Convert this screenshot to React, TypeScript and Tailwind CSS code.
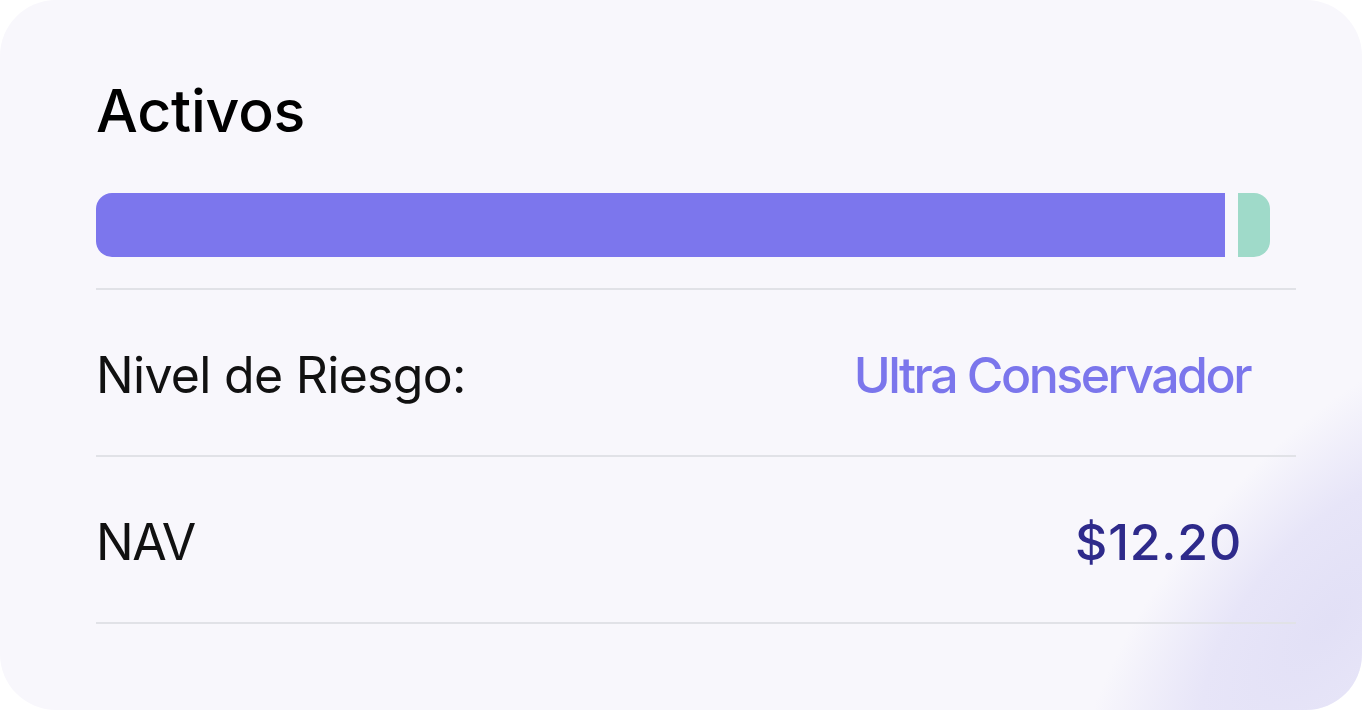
import React from 'react';

const rows = [
  {
    label: 'Nivel de Riesgo:',
    labelClass: 'tracking-[-0.7px]',
    value: 'Ultra Conservador',
    valueClass: 'text-[#7b76ec] pr-[46px] tracking-[-2.5px]',
  },
  {
    label: 'NAV',
    labelClass: 'tracking-[-1.5px]',
    value: '$12.20',
    valueClass: 'text-[#2e2a8b] pr-[54px] tracking-[0.8px]',
  },
];

const App = () => {
  return (
    <div className="w-[1364px] h-[712px] bg-white" style={{ fontFamily: 'Inter, "Open Sans", sans-serif' }}>
      <div className="relative w-[1362px] h-[710px] rounded-[56px] bg-[#f8f7fc] overflow-hidden pl-[96px] pr-[66px]">
        {/* soft lavender glow, bottom right */}
        <div className="absolute right-[-318px] bottom-[-70px] w-[700px] h-[320px] rounded-full bg-[radial-gradient(closest-side,#e2e0f6_0%,#e7e5f8_50%,rgba(248,247,252,0)_100%)] rotate-[-50deg] pointer-events-none" />

        <div className="relative">
          <h1 className="pt-[81px] text-[59px] leading-none font-medium text-black tracking-[-0.2px]">Activos</h1>

          {/* allocation bar */}
          <div className="mt-[53px] mr-[26px] flex h-[64px] gap-[13px]">
            <div className="flex-1 rounded-l-[16px] bg-[#7c76ed]" />
            <div className="w-[32px] rounded-r-[16px] bg-[#9fdac9]" />
          </div>

          <div className="mt-[31px] h-[2px] bg-[#e1e2e7]" />

          {rows.map((r) => (
            <div key={r.label}>
              <div className="flex h-[165px] items-center justify-between pt-[5px]">
                <span className={`text-[50px] leading-none text-[#111] ${r.labelClass}`}>{r.label}</span>
                <span className={`text-[50px] leading-none font-medium ${r.valueClass}`}>{r.value}</span>
              </div>
              <div className="h-[2px] bg-[#e1e2e7]" />
            </div>
          ))}
        </div>
      </div>
    </div>
  );
};

export default App;
